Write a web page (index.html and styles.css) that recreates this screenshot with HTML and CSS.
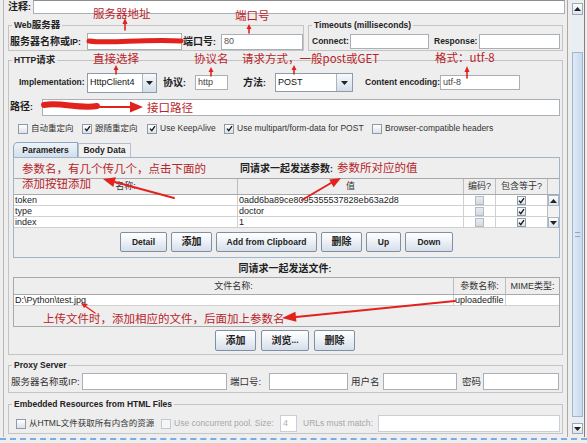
FILE: index.html
```html
<!DOCTYPE html>
<html lang="zh-CN">
<head>
<meta charset="utf-8">
<title>HTTP请求</title>
<link rel="stylesheet" href="styles.css">
</head>
<body>
<div class="app">
  <div class="upper">
    <div class="main">
      <div class="comment-row">
        <span class="lbl"><span class="zh">注释</span>:</span>
        <div class="field comment-field"></div>
      </div>

      <div class="top-row">
        <section class="grp web">
          <div class="legend">Web<span class="zh">服务器</span></div>
          <div class="frow">
            <span class="lbl w-ip"><span class="zh">服务器名称或</span>IP:</span>
            <div class="field f-ip"></div>
            <span class="lbl w-port"><span class="zh">端口号</span>:</span>
            <div class="field f-port">80</div>
          </div>
        </section>
        <section class="grp timeouts">
          <div class="legend">Timeouts (milliseconds)</div>
          <div class="frow">
            <span class="lbl w-conn">Connect:</span>
            <div class="field f-conn"></div>
            <span class="lbl w-resp">Response:</span>
            <div class="field f-resp"></div>
          </div>
        </section>
      </div>

      <section class="grp http">
        <div class="legend">HTTP<span class="zh">请求</span></div>
        <div class="impl-row">
          <span class="lbl w-impl">Implementation:</span>
          <div class="combo c-impl"><span class="combo-text">HttpClient4</span><span class="combo-btn"><svg width="7" height="4" viewBox="0 0 7 4"><polygon points="0,0 7,0 3.5,4" fill="#222"/></svg></span></div>
          <span class="lbl w-proto"><span class="zh">协议</span>:</span>
          <div class="field f-proto">http</div>
          <span class="lbl w-method"><span class="zh">方法</span>:</span>
          <div class="combo c-method"><span class="combo-text">POST</span><span class="combo-btn"><svg width="7" height="4" viewBox="0 0 7 4"><polygon points="0,0 7,0 3.5,4" fill="#222"/></svg></span></div>
          <span class="lbl w-enc">Content encoding:</span>
          <div class="field f-enc">utf-8</div>
        </div>
        <div class="path-row">
          <span class="lbl w-path"><span class="zh">路径</span>:</span>
          <div class="field f-path"></div>
        </div>
        <div class="check-row">
          <span class="chk k1"><span class="cb"></span>自动重定向</span>
          <span class="chk k2"><span class="cb"><svg width="7" height="7" viewBox="0 0 7 7"><path d="M1 3.6 L2.8 5.6 L6 1.2" stroke="#1a1a1a" stroke-width="1.4" fill="none"/></svg></span>跟随重定向</span>
          <span class="chk k3"><span class="cb"><svg width="7" height="7" viewBox="0 0 7 7"><path d="M1 3.6 L2.8 5.6 L6 1.2" stroke="#1a1a1a" stroke-width="1.4" fill="none"/></svg></span>Use KeepAlive</span>
          <span class="chk k4"><span class="cb"><svg width="7" height="7" viewBox="0 0 7 7"><path d="M1 3.6 L2.8 5.6 L6 1.2" stroke="#1a1a1a" stroke-width="1.4" fill="none"/></svg></span>Use multipart/form-data for POST</span>
          <span class="chk"><span class="cb"></span>Browser-compatible headers</span>
        </div>
        <div class="tabs">
          <div class="tab active">Parameters</div>
          <div class="tab t-body">Body Data</div>
        </div>
        <div class="tabpanel">
          <div class="ptitle lbl"><span class="zh">同请求一起发送参数</span>:</div>
          <div class="ptable">
            <div class="thead">
              <div>名称:</div><div>值</div><div>编码?</div><div>包含等于?</div><div></div>
            </div>
            <div class="tbody-wrap">
              <div class="tbody">
                <div>token</div><div>0add6ba89ce8095355537828eb63a2d8</div><div class="tc"><span class="cb sm off"></span></div><div class="tc"><span class="cb sm"><svg width="7" height="7" viewBox="0 0 7 7"><path d="M1 3.6 L2.8 5.6 L6 1.2" stroke="#1a1a1a" stroke-width="1.4" fill="none"/></svg></span></div>
                <div>type</div><div>doctor</div><div class="tc"><span class="cb sm off"></span></div><div class="tc"><span class="cb sm"><svg width="7" height="7" viewBox="0 0 7 7"><path d="M1 3.6 L2.8 5.6 L6 1.2" stroke="#1a1a1a" stroke-width="1.4" fill="none"/></svg></span></div>
                <div>index</div><div>1</div><div class="tc"><span class="cb sm off"></span></div><div class="tc"><span class="cb sm"><svg width="7" height="7" viewBox="0 0 7 7"><path d="M1 3.6 L2.8 5.6 L6 1.2" stroke="#1a1a1a" stroke-width="1.4" fill="none"/></svg></span></div>
              </div>
              <div class="tscroll">
                <div class="tsbtn"><svg width="7" height="4" viewBox="0 0 7 4"><polygon points="0,4 7,4 3.5,0" fill="#222"/></svg></div>
                <div class="tsgap"></div>
                <div class="tsbtn"><svg width="7" height="4" viewBox="0 0 7 4"><polygon points="0,0 7,0 3.5,4" fill="#222"/></svg></div>
              </div>
            </div>
          </div>
          <div class="btnrow">
            <div class="btn b-detail">Detail</div>
            <div class="btn b-add"><span class="zh">添加</span></div>
            <div class="btn b-clip">Add from Clipboard</div>
            <div class="btn b-del"><span class="zh">删除</span></div>
            <div class="btn b-up">Up</div>
            <div class="btn b-down">Down</div>
          </div>
        </div>
        <div class="ftitle lbl"><span class="zh">同请求一起发送文件</span>:</div>
        <div class="ftable">
          <div class="fhead"><div>文件名称:</div><div>参数名称:</div><div>MIME类型:</div></div>
          <div class="fbody"><div>D:\Python\test.jpg</div><div>uploadedfile</div><div></div></div>
        </div>
        <div class="btnrow fbtns">
          <div class="btn b-fadd"><span class="zh">添加</span></div>
          <div class="btn b-browse"><span class="zh">浏览</span>...</div>
          <div class="btn b-fdel"><span class="zh">删除</span></div>
        </div>
      </section>

      <section class="grp proxy">
        <div class="legend">Proxy Server</div>
        <div class="frow prow">
          <span class="plbl w-p1">服务器名称或IP:</span>
          <div class="field pf1"></div>
          <span class="plbl w-p2">端口号:</span>
          <div class="field pf2"></div>
          <span class="plbl w-p3">用户名</span>
          <div class="field pf3"></div>
          <span class="plbl w-p4">密码</span>
          <div class="field pf4"></div>
        </div>
      </section>

      <section class="grp embed">
        <div class="legend">Embedded Resources from HTML Files</div>
        <div class="frow erow">
          <span class="chk w-e1"><span class="cb"></span>从HTML文件获取所有内含的资源</span>
          <span class="chk dis w-e2"><span class="cb"></span>Use concurrent pool. Size:</span>
          <div class="field dfield ef1">4</div>
          <span class="dis w-e3">URLs must match:</span>
          <div class="field dfield ef2"></div>
        </div>
      </section>
    </div>

    <div class="vscroll">
      <div class="sb-btn"><svg width="7" height="4" viewBox="0 0 7 4"><polygon points="0,4 7,4 3.5,0" fill="#222"/></svg></div>
      <div class="sb-track">
        <div class="sb-thumb"><span class="grip"></span></div>
      </div>
      <div class="sb-btn sb-down"><svg width="7" height="4" viewBox="0 0 7 4"><polygon points="0,0 7,0 3.5,4" fill="#222"/></svg></div>
    </div>
  </div>
  <div class="dash"></div>

  <svg class="marks" width="587" height="443" viewBox="0 0 587 443">
    <g stroke="#e2231d" fill="none" stroke-linecap="round">
      <path d="M89 41 C110 44 140 39 181 41" stroke-width="5"/>
      <path d="M44 105 C60 102 80 109 97 106" stroke-width="6"/>
      <line x1="97" y1="107" x2="132" y2="107" stroke-width="2"/>
      <line x1="125" y1="30" x2="125" y2="23" stroke-width="1.6"/>
      <line x1="249" y1="33" x2="249" y2="28" stroke-width="1.6"/>
      <line x1="116" y1="74" x2="116" y2="69" stroke-width="1.6"/>
      <line x1="211" y1="76" x2="211" y2="71" stroke-width="1.6"/>
      <line x1="294" y1="74" x2="294" y2="69" stroke-width="1.6"/>
      <line x1="467" y1="78" x2="467" y2="71" stroke-width="1.6"/>
      <line x1="174" y1="198" x2="115" y2="182" stroke-width="2"/>
      <line x1="302" y1="200" x2="331" y2="183" stroke-width="2"/>
      <line x1="455" y1="301" x2="296" y2="317" stroke-width="2.2"/>
      <line x1="95" y1="313" x2="85" y2="306" stroke-width="1.4"/>
    </g>
    <g fill="#e2231d">
      <polygon points="143,107 130,101.5 130,112.5"/>
      <polygon points="125,18 122.5,24 127.5,24"/>
      <polygon points="249,24 246.5,29 251.5,29"/>
      <polygon points="116,65 113.5,70 118.5,70"/>
      <polygon points="211,67 208.5,72 213.5,72"/>
      <polygon points="294,65 291.5,70 296.5,70"/>
      <polygon points="467,66 464.5,72 469.5,72"/>
      <polygon points="103,179 115.9,177.3 113.3,186.9"/>
      <polygon points="341,178 333.6,187.3 329.2,179.5"/>
      <polygon points="282,318 295.4,311.7 296.4,321.7"/>
      <polygon points="81,303 88,304 84,308"/>
    </g>
  </svg>

  <span class="note n1">服务器地址</span>
  <span class="note n2">端口号</span>
  <span class="note n3">直接选择</span>
  <span class="note n4">协议名</span>
  <span class="note n5">请求方式，一般post或GET</span>
  <span class="note n6">格式：utf-8</span>
  <span class="note n7">接口路径</span>
  <span class="note n8">参数名，有几个传几个，点击下面的<br>添加按钮添加</span>
  <span class="note n9">参数所对应的值</span>
  <span class="note n10">上传文件时，添加相应的文件，后面加上参数名</span>
</div>
</body>
</html>
```

FILE: styles.css
```css
* { box-sizing: border-box; }
html, body { margin: 0; padding: 0; background: #eeeeee; }
body {
  font-family: "Liberation Sans", "Noto Sans CJK SC", sans-serif;
  font-size: 9px;
  line-height: 1;
  color: #222;
}
.app {
  position: relative;
  width: 587px;
  height: 443px;
  overflow: hidden;
  display: flex;
  flex-direction: column;
  background: #eeeeee;
}
.upper { display: flex; height: 437px; flex: none; }
.main {
  width: 564px;
  height: 437px;
  margin-left: 3px;
  border-left: 1px solid #b8b8b8;
  display: flex;
  flex-direction: column;
  flex: none;
}

/* labels & fields */
.lbl { font-weight: bold; font-size: 8.5px; white-space: nowrap; color: #1f1f1f; flex: none; }
.zh { font-size: 10px; }
.field {
  background: #fff;
  border: 1px solid #a9afb6;
  height: 16px;
  display: flex;
  align-items: center;
  padding-left: 2px;
  font-size: 9px;
  color: #444;
  white-space: nowrap;
  overflow: hidden;
  flex: none;
}
.comment-row { display: flex; height: 15px; padding-left: 4px; flex: none; }
.comment-row .lbl { margin-top: 2px; width: 25px; }
.comment-field { width: 532px; height: 14px; margin-left: 0; border-top-color: #8d8d8d; }

/* group boxes */
.grp { border: 1px solid #c4c4c4; flex: none; padding: 0 0 0 1px; }
.legend {
  width: fit-content;
  height: 10px;
  margin: -6px 0 0 2px;
  padding: 0 2px;
  background: #eeeeee;
  font-weight: bold;
  font-size: 8.5px;
  line-height: 10px;
  white-space: nowrap;
  color: #222;
}
.legend .zh { font-size: 9.5px; }

.top-row { display: flex; gap: 4px; margin-top: 10px; padding-left: 4px; flex: none; }
.web { width: 296px; }
.timeouts { width: 255px; padding-right: 2px; }
.frow { display: flex; align-items: center; height: 17px; margin-top: 3px; }
.w-ip { width: 77px; }
.f-ip { width: 95px; height: 17px; }
.w-port { width: 39px; padding-left: 1px; }
.f-port { flex: 1; color: #555; }
.timeouts .frow { margin-left: 2px; }
.w-conn { width: 38px; }
.f-conn { width: 79px; height: 15px; }
.w-resp { width: 50px; padding-left: 5px; }
.f-resp { flex: 1; height: 15px; }

/* HTTP group */
.http { width: 555px; margin: 9px 0 0 4px; padding: 0 2px 3px 1px; display: flex; flex-direction: column; }
.impl-row { display: flex; align-items: center; height: 21px; margin: 7px 0 0 9px; flex: none; }
.w-impl { width: 68px; }
.combo {
  display: flex;
  height: 20px;
  background: #fff;
  border: 1px solid #8d9bab;
  flex: none;
}
.combo-text { flex: 1; display: flex; align-items: center; padding-left: 2px; font-size: 9px; color: #111; }
.combo-btn {
  width: 14px;
  display: flex;
  align-items: center;
  justify-content: center;
  border-left: 1px solid #a6b4c3;
  background: linear-gradient(#f7f9fc, #d3dde8);
}
.c-impl { width: 70px; }
.w-proto { width: 38px; padding-left: 6px; }
.f-proto { width: 33px; height: 15px; }
.w-method { width: 47px; padding-left: 15px; }
.c-method { width: 78px; height: 19px; }
.c-method .combo-btn { width: 16px; }
.w-enc { width: 87px; padding-left: 12px; }
.f-enc { width: 80px; height: 15px; }

.path-row { display: flex; align-items: center; height: 18px; margin-top: 5px; flex: none; }
.w-path { width: 32px; }
.f-path { flex: 1; height: 17px; }

.check-row { display: flex; align-items: center; height: 11px; margin-top: 7px; margin-left: 8px; flex: none; }
.chk { display: flex; align-items: center; gap: 3px; font-size: 8.5px; color: #333; white-space: nowrap; flex: none; }
.k1 { width: 64px; }
.k2 { width: 65px; }
.k3 { width: 77px; }
.k4 { width: 148px; }
.cb {
  width: 10px;
  height: 10px;
  border: 1px solid #8e9aa7;
  background: linear-gradient(#ffffff, #dbe2ea);
  display: flex;
  align-items: center;
  justify-content: center;
  flex: none;
}
.cb.sm { width: 9px; height: 9px; }
.cb.off { background: linear-gradient(#e9edf1, #d2d9e1); border-color: #b3bcc6; }

/* tabs */
.tabs { display: flex; align-items: flex-end; height: 15px; margin: 8px 0 0 3px; flex: none; }
.tab {
  display: flex;
  align-items: center;
  justify-content: center;
  font-weight: bold;
  font-size: 8.5px;
  height: 14px;
  border: 1px solid #b2bfcc;
  border-bottom: none;
  background: #f1f1f1;
  color: #222;
}
.tab.active {
  width: 65px;
  height: 15px;
  background: linear-gradient(#edf3f9, #d2dfec);
  border-color: #8ea6be;
  border-top-left-radius: 5px;
}
.t-body { width: 53px; }
.tabpanel {
  height: 101px;
  margin-left: 3px;
  border: 1px solid #9fb5cb;
  display: flex;
  flex-direction: column;
  flex: none;
}
.ptitle { height: 20px; display: flex; align-items: center; justify-content: center; padding-top: 2px; flex: none; }
.ptable { height: 50px; display: flex; flex-direction: column; flex: none; }
.thead {
  display: grid;
  grid-template-columns: 223px 226px 32px 52px 12px;
  height: 17px;
  border-top: 1px solid #a9a9a9;
  border-bottom: 1px solid #a9a9a9;
  background: #eeeeee;
}
.thead div, .fhead div {
  display: flex;
  align-items: center;
  justify-content: center;
  border-left: 1px solid #bdbdbd;
  font-size: 9px;
  color: #333;
}
.thead div:first-child, .fhead div:first-child { border-left: none; }
.tbody-wrap { display: flex; height: 33px; }
.tbody {
  display: grid;
  grid-template-columns: 223px 226px 32px 52px;
  grid-auto-rows: 11px;
  background: #fff;
  flex: none;
}
.tbody div, .fbody div {
  border-bottom: 1px solid #d0d0d0;
  border-left: 1px solid #d0d0d0;
  padding-left: 1px;
  font-size: 9px;
  color: #222;
  display: flex;
  align-items: center;
  overflow: hidden;
  white-space: nowrap;
}
.tbody div:nth-child(4n+1) { border-left: none; }
.tbody div.tc { justify-content: center; padding-left: 0; }
.tscroll { width: 12px; display: flex; flex-direction: column; border-left: 1px solid #bdbdbd; background: #f2f2f2; }
.tsbtn {
  height: 11px;
  display: flex;
  align-items: center;
  justify-content: center;
  border: 1px solid #a9b5c2;
  background: linear-gradient(#fbfcfd, #dee5ed);
}
.tsgap { flex: 1; }

.btnrow { display: flex; justify-content: center; gap: 4px; margin-top: 4px; height: 20px; flex: none; }
.btn {
  height: 20px;
  border: 1px solid #7f90a3;
  border-radius: 2px;
  background: linear-gradient(#ffffff, #eef2f7 45%, #d5dee9);
  display: flex;
  align-items: center;
  justify-content: center;
  font-weight: bold;
  font-size: 8.5px;
  color: #222;
  white-space: nowrap;
}
.b-detail { width: 47px; }
.b-add { width: 41px; }
.b-clip { width: 101px; }
.b-del { width: 41px; }
.b-up { width: 35px; }
.b-down { width: 48px; }

.ftitle { height: 19px; display: flex; align-items: center; justify-content: center; padding-top: 3px; flex: none; }
.ftable {
  height: 50px;
  margin-left: 3px;
  border: 1px solid #a9a9a9;
  display: flex;
  flex-direction: column;
  flex: none;
}
.fhead { display: grid; grid-template-columns: 439px 52px 54px; height: 17px; border-bottom: 1px solid #a9a9a9; }
.fbody { display: grid; grid-template-columns: 439px 52px 54px; height: 11px; background: #fff; }
.fbody div:first-child { border-left: none; }
.fbtns { margin-top: 3px; height: 21px; gap: 5px; }
.fbtns .btn { height: 21px; }
.b-fadd { width: 41px; }
.b-browse { width: 48px; }
.b-fdel { width: 41px; }

/* proxy */
.proxy { width: 555px; margin: 10px 0 0 4px; padding: 0 3px 2px 1px; }
.prow { margin-left: 1px; }
.plbl { font-size: 9.5px; color: #333; white-space: nowrap; flex: none; }
.w-p1 { width: 71px; }
.pf1 { width: 145px; height: 17px; }
.w-p2 { width: 42px; padding-left: 3px; }
.pf2 { width: 79px; height: 17px; }
.w-p3 { width: 35px; padding-left: 3px; }
.pf3 { width: 74px; height: 17px; }
.w-p4 { width: 26px; padding-left: 5px; }
.pf4 { flex: 1; height: 17px; }

/* embedded */
.embed { width: 555px; margin: 11px 0 0 4px; padding: 0 2px 1px 1px; }
.erow { margin: 6px 0 0 6px; }
.w-e1 { width: 145px; }
.w-e2 { width: 119px; }
.dis { color: #a8a8a8; font-size: 8.5px; white-space: nowrap; flex: none; }
.dis .cb { border-color: #c2c8cf; background: #f4f6f8; }
.dfield { border-color: #c9cfd6; color: #b0b0b0; }
.ef1 { width: 17px; height: 17px; }
.w-e3 { width: 81px; padding-left: 6px; }
.ef2 { flex: 1; height: 17px; }

/* scrollbar */
.vscroll {
  width: 18px;
  height: 437px;
  border-left: 1px solid #a9a9a9;
  border-right: 1px solid #7f7f7f;
  padding: 3px 1px 3px 4px;
  display: flex;
  flex-direction: column;
  flex: none;
  background: #eeeeee;
}
.sb-btn {
  height: 12px;
  border: 1px solid #9aa9b8;
  background: linear-gradient(#fbfcfd, #dde5ee);
  display: flex;
  align-items: center;
  justify-content: center;
  flex: none;
}
.sb-down { height: 11px; }
.sb-track { flex: 1; padding: 37px 0 6px; background: #e9eef3; }
.sb-thumb {
  height: 100%;
  border: 1px solid #9db6d3;
  background: linear-gradient(90deg, #dfeaf6, #c8d9ed);
  display: flex;
  align-items: center;
  justify-content: center;
}
.grip {
  width: 5px;
  height: 5px;
  border-top: 1px solid #8fa8c6;
  border-bottom: 1px solid #8fa8c6;
}
.dash { height: 6px; margin-top: 1px; border-top: 2px dashed #7aaee0; flex: none; }

/* annotations */
.marks { position: absolute; left: 0; top: 0; pointer-events: none; }
.note {
  position: absolute;
  font-family: "Noto Sans CJK SC", "Liberation Sans", sans-serif;
  font-size: 11.5px;
  line-height: 13px;
  color: #b8242a;
  white-space: nowrap;
}
.n1 { left: 93px; top: 7px; }
.n2 { left: 235px; top: 9px; }
.n3 { left: 93px; top: 52px; }
.n4 { left: 194px; top: 52px; }
.n5 { left: 242px; top: 52px; }
.n6 { left: 435px; top: 51px; }
.n7 { left: 147px; top: 101px; }
.n8 { left: 22px; top: 161px; line-height: 15px; }
.n9 { left: 337px; top: 161px; }
.n10 { left: 43px; top: 312px; }
```
